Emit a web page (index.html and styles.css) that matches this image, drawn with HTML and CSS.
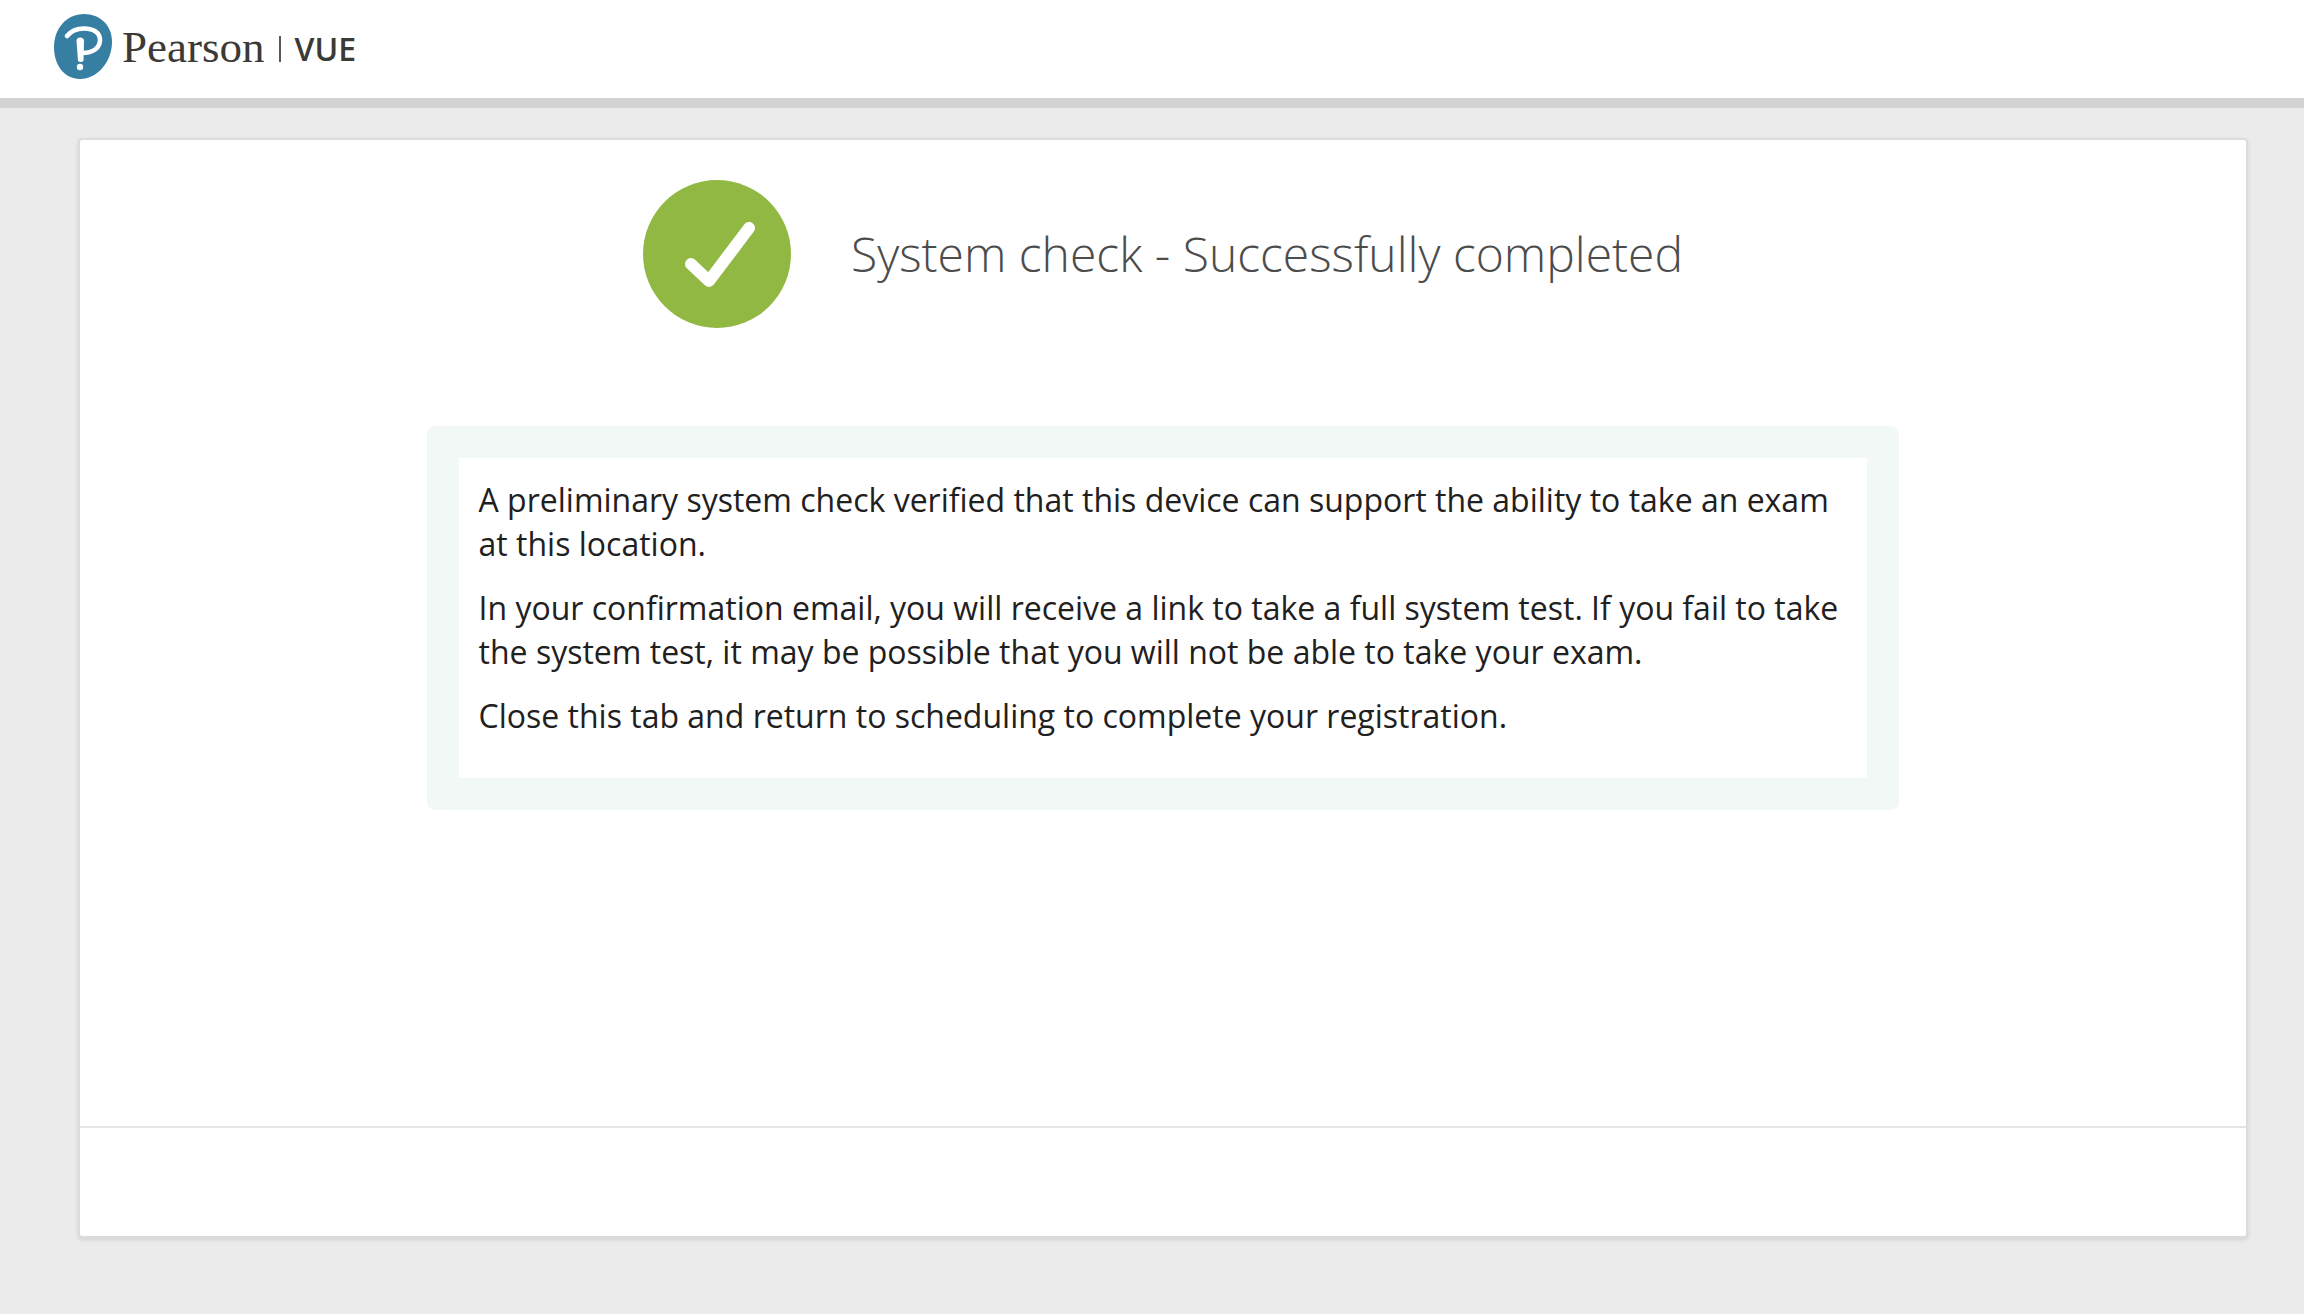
FILE: index.html
```html
<!DOCTYPE html>
<html lang="en">
<head>
    <meta charset="UTF-8">
    <meta name="viewport" content="width=device-width, initial-scale=1.0">
    <title>System check - Pearson VUE</title>
    <link rel="stylesheet" href="styles.css">
</head>
<body>
    <header class="header">
        <div class="logo">
            <svg class="logo-mark" viewBox="0 0 58 65" aria-hidden="true">
                <path fill="#367fa2" d="M30 0C46 0 58 11 58 28C58 48 43 65 26 65C10 65 0 51 0 33C0 14 13 0 30 0Z"/>
                <path fill="none" stroke="#fff" stroke-width="4.6" stroke-linecap="round" d="M13 22C17 17 24 14.500 30 14.500C40 14.500 46 19 46 26C46 34 39 39 28 39"/>
                <path fill="#fff" d="M22.500 27Q22.500 23.500 26 23.500Q30 23.500 30 27L29.500 47Q26 49 24 47Z"/>
                <circle fill="#fff" cx="26" cy="53" r="3.200"/>
            </svg>
            <span class="logo-name">Pearson</span>
            <span class="logo-divider"></span>
            <span class="logo-unit">VUE</span>
        </div>
    </header>

    <main class="panel">
        <div class="panel-body">
            <div class="result">
                <svg class="result-icon" viewBox="0 0 148 148" aria-hidden="true">
                    <circle fill="#90b843" cx="74" cy="74" r="74"/>
                    <path fill="none" stroke="#fff" stroke-width="12" stroke-linecap="round" stroke-linejoin="round" d="M48 84L66 101L106 48"/>
                </svg>
                <h1>System check - Successfully completed</h1>
            </div>

            <div class="message">
                <div class="message-text">
                    <p>A preliminary system check verified that this device can support the ability to take an exam at this location.</p>
                    <p>In your confirmation email, you will receive a link to take a full system test. If you fail to take the system test, it may be possible that you will not be able to take your exam.</p>
                    <p>Close this tab and return to scheduling to complete your registration.</p>
                </div>
            </div>
        </div>
        <footer class="panel-footer"></footer>
    </main>
</body>
</html>
```

FILE: styles.css
```css
* {
    box-sizing: border-box;
}

body {
    margin: 0;
    min-height: 100vh;
    background-color: #ebebeb;
    color: #1f2020;
    font-family: "Open Sans", "Noto Sans", sans-serif;
    font-size: 32px;
    line-height: 44px;
}

.header {
    display: flex;
    height: 108px;
    padding: 14px 54px 0;
    background-color: #fff;
    border-bottom: 10px solid #d3d3d3;
}

.logo {
    display: flex;
    align-items: center;
    height: 65px;
    color: #3b3a36;
}

.logo-mark {
    width: 58px;
    height: 65px;
    margin-right: 10px;
}

.logo-name {
    font-family: "Liberation Serif", serif;
    font-size: 45px;
}

.logo-divider {
    width: 2px;
    height: 26px;
    margin: 4px 13px 0 15px;
    background-color: #5b5a57;
}

.logo-unit {
    padding-top: 4px;
    font-weight: 600;
}

.panel {
    margin: 30px 56px 76px 78px;
    background-color: #fff;
    border: 2px solid #dcdcdc;
    border-radius: 4px;
    box-shadow: 0 2px 4px rgba(0, 0, 0, 0.1);
}

.panel-body {
    min-height: 986px;
    padding-top: 40px;
}

.result {
    display: flex;
    justify-content: center;
    align-items: center;
    gap: 60px;
}

.result-icon {
    flex: none;
    width: 148px;
    height: 148px;
}

h1 {
    margin: 0;
    color: #4c4c4c;
    font-size: 48px;
    font-weight: 300;
    line-height: 68px;
}

.message {
    width: 68%;
    margin: 98px auto 0;
    padding: 32px;
    background-color: #f2f8f6;
    border-radius: 8px;
}

.message-text {
    padding: 20px;
    background-color: #fff;
}

.message-text p {
    margin: 0 0 20px;
}

.panel-footer {
    height: 110px;
    border-top: 2px solid #e5e5e5;
}
```
